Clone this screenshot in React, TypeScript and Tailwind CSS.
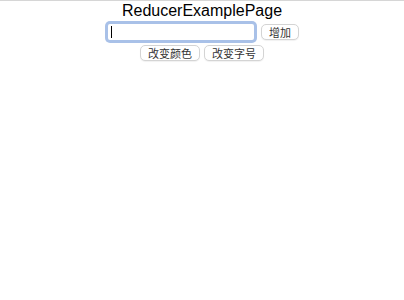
import { useReducer } from 'react';

type State = { text: string; color: string; size: number };
type Action = { type: 'add' } | { type: 'color' } | { type: 'size' };

function reducer(state: State, action: Action): State {
  switch (action.type) {
    case 'color':
      return { ...state, color: state.color === '#000' ? '#c00' : '#000' };
    case 'size':
      return { ...state, size: state.size + 1 };
    default:
      return state;
  }
}

const btn =
  "h-[16px] rounded-[5px] border border-[#d4d4d4] bg-white px-[7px] text-[11px] leading-[14px] text-[#333] shadow-[0_1px_1px_rgba(0,0,0,0.06)] font-['Noto_Sans_CJK_SC',sans-serif]";

export default function App() {
  const [, dispatch] = useReducer(reducer, { text: '', color: '#000', size: 16 });

  return (
    <div className="min-h-[300px] w-full border-t border-[#d6d6d6] bg-white font-['Liberation_Sans',Arial,sans-serif] text-black">
      <div className="text-center text-[16px] leading-[20px]">ReducerExamplePage</div>

      <div className="flex h-[22px] items-center justify-center gap-[4px]">
        <div className="flex h-[22px] w-[152px] items-center rounded-[5px] bg-[#a9c1e8] p-[3px]">
          <div className="flex h-full w-full items-center rounded-[2px] bg-white pl-[3px]">
            <span className="h-[12px] w-[1px] bg-black" />
          </div>
        </div>
        <button className={btn} onClick={() => dispatch({ type: 'add' })}>
          增加
        </button>
      </div>

      <div className="mt-[2px] flex justify-center gap-[4px]">
        <button className={btn} onClick={() => dispatch({ type: 'color' })}>
          改变颜色
        </button>
        <button className={btn} onClick={() => dispatch({ type: 'size' })}>
          改变字号
        </button>
      </div>
    </div>
  );
}
